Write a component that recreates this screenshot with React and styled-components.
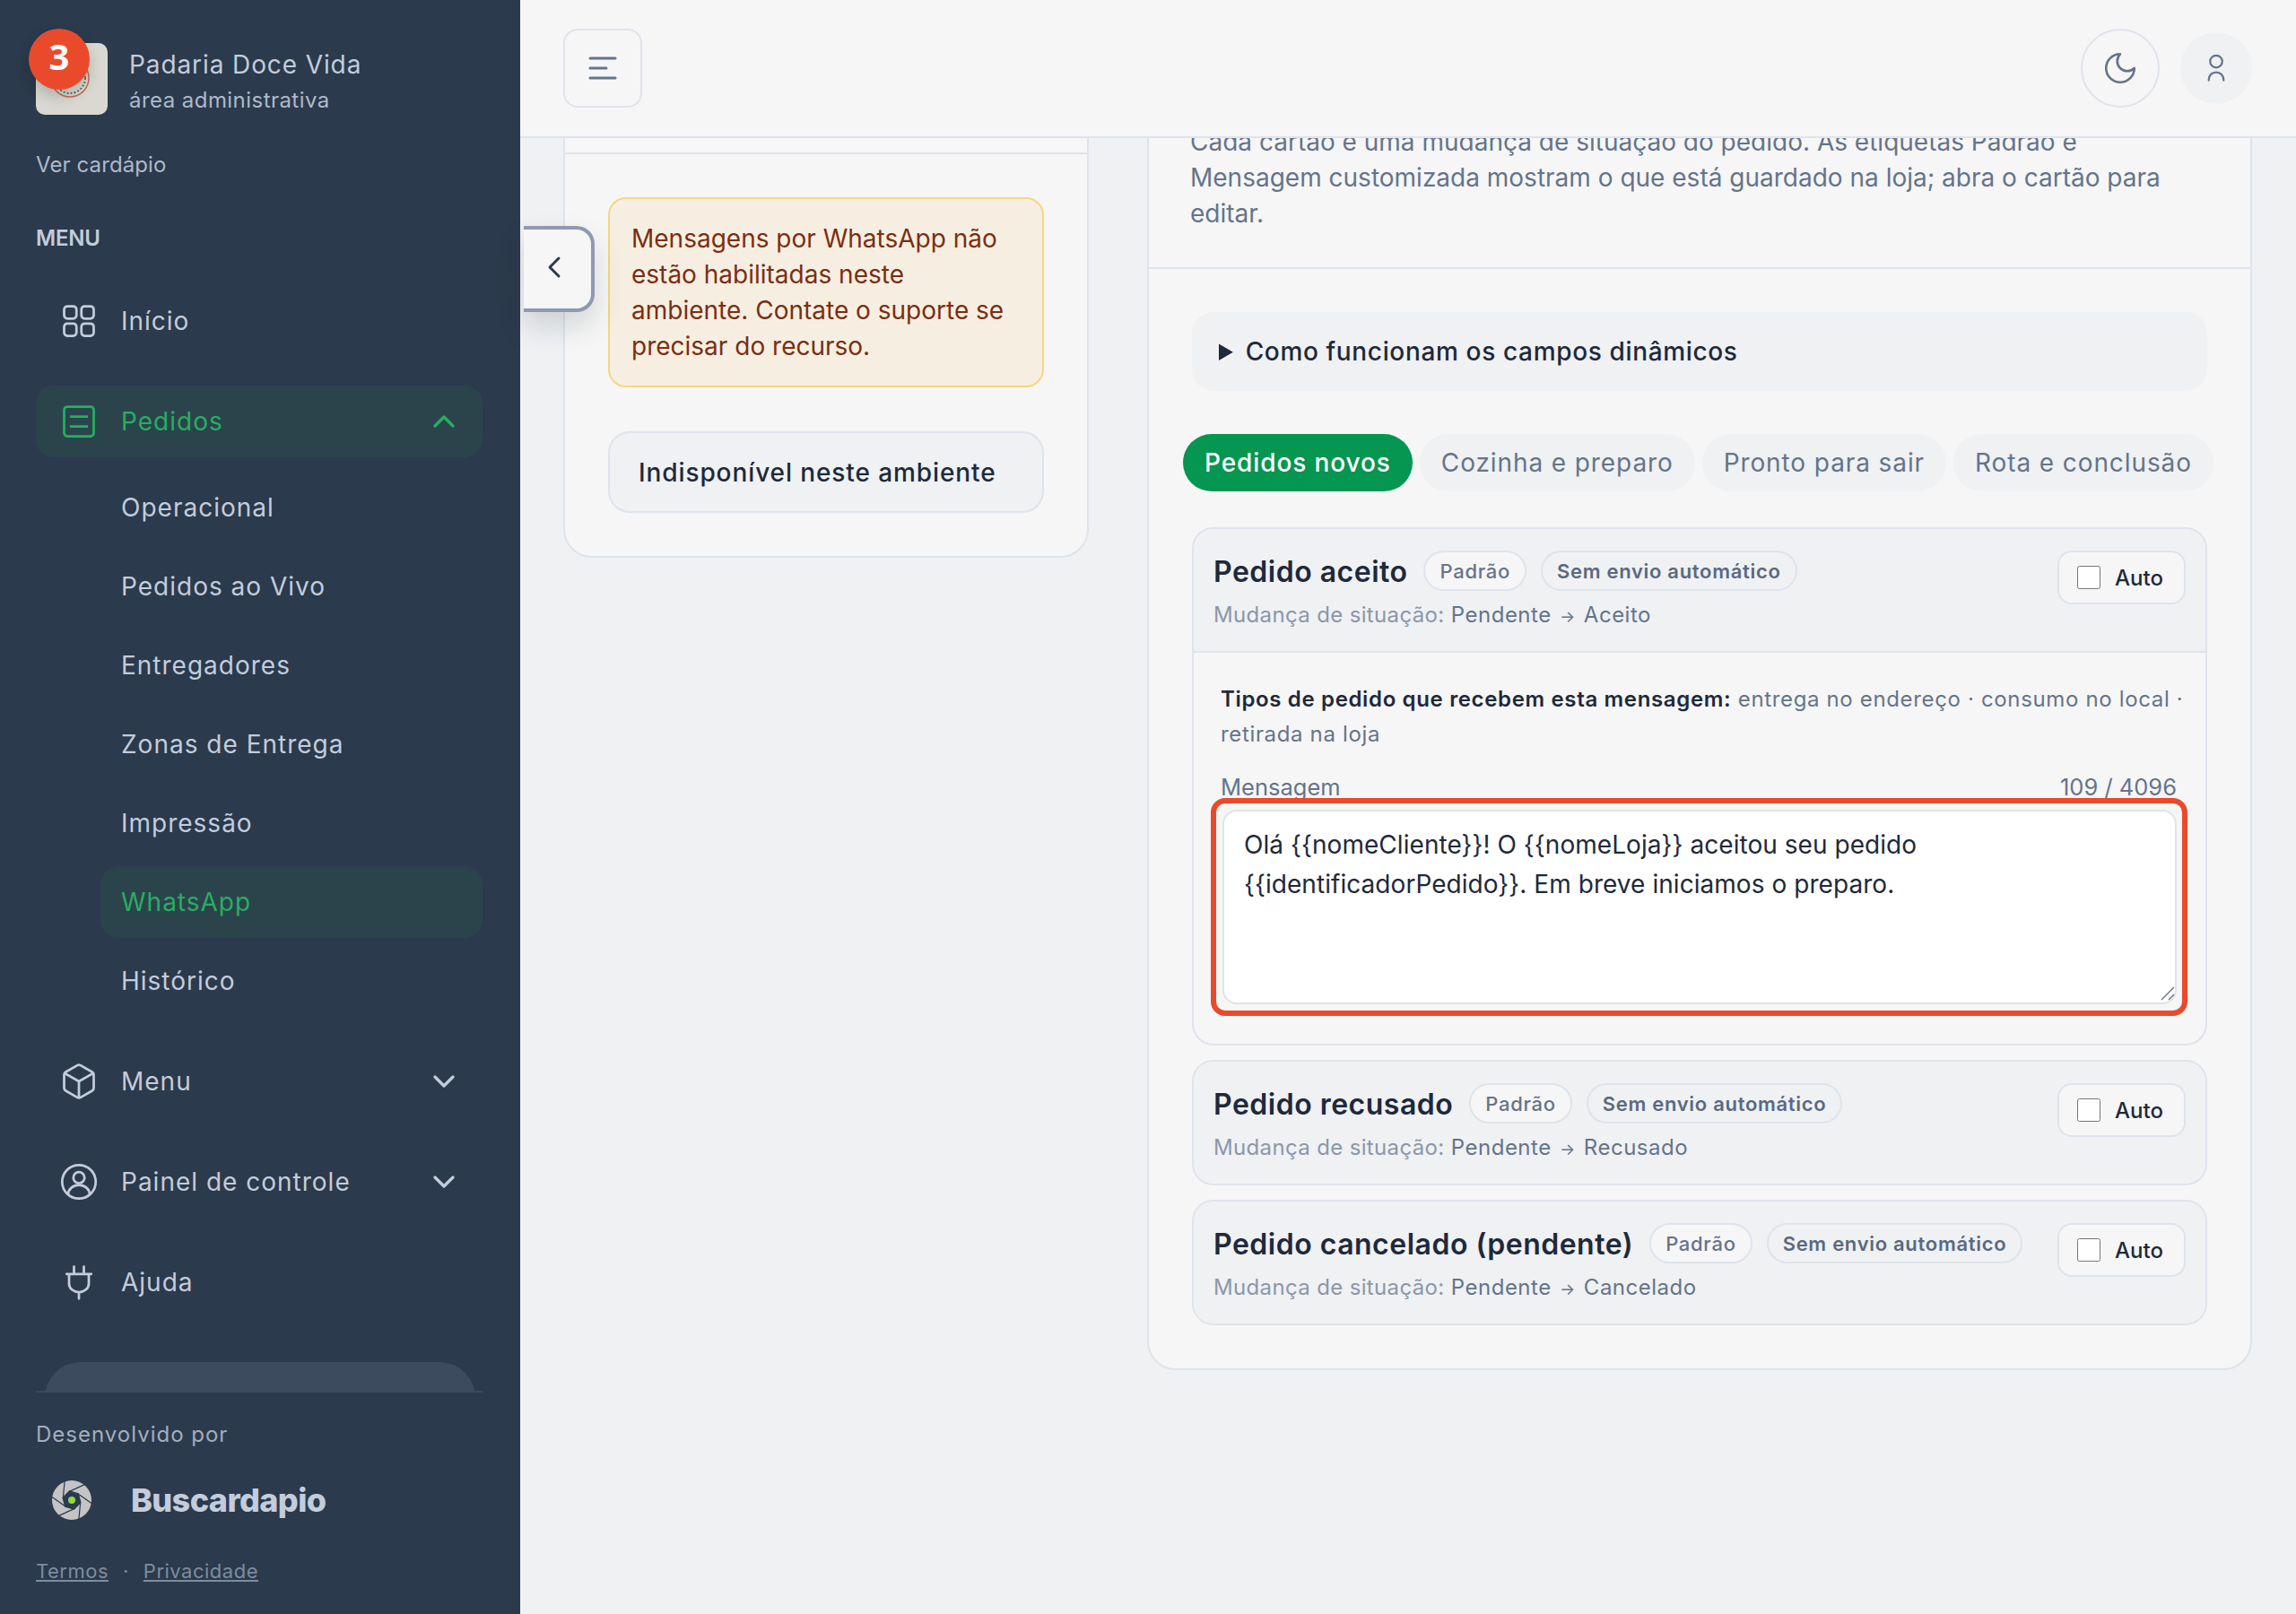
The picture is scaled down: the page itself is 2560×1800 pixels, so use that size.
import React from 'react';
import styled, { createGlobalStyle } from 'styled-components';
import { ChevronDown, ChevronLeft, ChevronUp } from 'lucide-react';

const GlobalStyle = createGlobalStyle`
	* {
		box-sizing: border-box;
	}
	html, body {
		margin: 0;
		padding: 0;
	}
	body {
		font-family: 'Inter', 'Liberation Sans', sans-serif;
		background: #eff1f3;
	}
`;

const Page = styled.div`
	display: flex;
	width: 2560px;
	height: 1800px;
	overflow: hidden;
`;

const Sidebar = styled.aside`
	display: flex;
	flex-direction: column;
	flex: 0 0 580px;
	height: 100%;
	padding: 48px 42px 0 40px;
	background: #2b3a4c;
	color: #c3ccdc;
`;

const Brand = styled.div`
	position: relative;
	display: flex;
	align-items: center;
	gap: 24px;
	height: 80px;
`;

const LogoTile = styled.div`
	flex: 0 0 80px;
	height: 80px;
	border-radius: 10px;
	background: #d9d9d2;
	svg {
		display: block;
	}
`;

const Badge = styled.span`
	position: absolute;
	left: -8px;
	top: -16px;
	display: flex;
	align-items: center;
	justify-content: center;
	width: 68px;
	height: 68px;
	padding-bottom: 7px;
	border-radius: 50%;
	background: #ea4a2c;
	color: #fff;
	font-family: 'Open Sans', sans-serif;
	font-size: 40px;
	font-weight: 700;
	box-shadow: 0 8px 16px rgba(0, 0, 0, 0.18);
`;

const BrandText = styled.div`
	display: flex;
	flex-direction: column;
	gap: 4px;
	padding-top: 3px;
`;

const BrandName = styled.span`
	font-size: 28px;
	line-height: 40px;
	letter-spacing: 0.9px;
`;

const BrandSub = styled.span`
	font-size: 24px;
	line-height: 32px;
	letter-spacing: 0.45px;
	color: #aeb9ca;
`;

const MenuLink = styled.a`
	margin-top: 36px;
	font-size: 24px;
	line-height: 40px;
	letter-spacing: 0.1px;
	color: #aeb9ca;
`;

const SectionLabel = styled.h3`
	margin: 42px 0 32px;
	font-size: 24px;
	line-height: 40px;
	font-weight: 600;
	letter-spacing: -0.2px;
	color: #c3ccdc;
`;

const Nav = styled.nav`
	flex: 1;
	min-height: 0;
	overflow: hidden;
`;

const NavItem = styled.div`
	display: flex;
	align-items: center;
	gap: 25px;
	height: 80px;
	margin-bottom: ${(p) => (p.$open ? '16px' : '32px')};
	padding: 0 23px 0 26px;
	border-radius: 20px;
	font-size: 28px;
	letter-spacing: 1px;
	background: ${(p) => (p.$active ? '#2b444c' : 'transparent')};
	color: ${(p) => (p.$active ? '#27ae60' : '#c3ccdc')};
	svg {
		flex: none;
	}
	svg.caret {
		margin-left: auto;
	}
`;

const SubList = styled.div`
	display: flex;
	flex-direction: column;
	gap: 8px;
	margin: 0 0 32px 72px;
`;

const SubItem = styled.div`
	display: flex;
	align-items: center;
	height: 80px;
	padding-left: 23px;
	border-radius: 20px;
	font-size: 28px;
	letter-spacing: 1px;
	background: ${(p) => (p.$active ? '#2b444c' : 'transparent')};
	color: ${(p) => (p.$active ? '#27ae60' : '#c3ccdc')};
`;

const NavPeek = styled.div`
	height: 100px;
	margin: 49px 8px 0 10px;
	border-radius: 40px 40px 0 0;
	background: #3c4b5d;
`;

const SideFooter = styled.footer`
	height: 249px;
	padding-top: 29px;
	border-top: 2px solid #3a4a5c;
`;

const MadeBy = styled.div`
	font-size: 24px;
	line-height: 36px;
	letter-spacing: 1px;
	color: #a3aebf;
`;

const MakerRow = styled.div`
	display: flex;
	align-items: center;
	gap: 44px;
	margin-top: 28px;
	padding-left: 18px;
	height: 54px;
`;

const MakerName = styled.span`
	font-family: 'Inter', sans-serif;
	font-size: 36px;
	font-weight: 800;
	letter-spacing: -0.6px;
	color: #c3ccdc;
`;

const LegalRow = styled.div`
	display: flex;
	align-items: center;
	gap: 16px;
	margin-top: 36px;
	font-size: 22px;
	line-height: 32px;
	letter-spacing: 0.5px;
	color: #7e8ca0;
`;

const LegalLink = styled.a`
	color: inherit;
	text-decoration: underline;
`;

const Main = styled.main`
	position: relative;
	display: flex;
	flex-direction: column;
	flex: 1;
	min-width: 0;
	height: 100%;
`;

const TopBar = styled.header`
	display: flex;
	align-items: center;
	justify-content: space-between;
	flex: 0 0 154px;
	padding: 0 49px 0 48px;
	border-bottom: 2px solid #dfe3eb;
	background: #f6f6f6;
`;

const SquareButton = styled.button`
	display: flex;
	align-items: center;
	justify-content: center;
	width: 88px;
	height: 88px;
	padding: 0;
	border: 2px solid #dfe3eb;
	border-radius: 16px;
	background: transparent;
	color: #64748b;
`;

const TopActions = styled.div`
	display: flex;
	align-items: center;
	gap: 23px;
`;

const ThemeButton = styled(SquareButton)`
	border-radius: 50%;
`;

const UserButton = styled.button`
	display: flex;
	align-items: center;
	justify-content: center;
	width: 80px;
	height: 80px;
	padding: 0;
	border: 0;
	border-radius: 50%;
	background: #eff1f3;
	color: #64748b;
`;

const CollapseTab = styled.button`
	position: absolute;
	left: 4px;
	top: 252px;
	display: flex;
	align-items: center;
	justify-content: center;
	width: 79px;
	height: 96px;
	padding: 0 8px 4px 0;
	border: 4px solid #8e9aae;
	border-left: 0;
	border-radius: 0 20px 20px 0;
	background: #f6f6f6;
	color: #2b3a4c;
	box-shadow: 0 16px 32px rgba(30, 41, 59, 0.16);
`;

const Scroller = styled.div`
	flex: 1;
	min-height: 0;
	overflow: hidden;
`;

const Columns = styled.div`
	display: grid;
	grid-template-columns: 586px minmax(0, 1fr);
	align-items: start;
	gap: 65px;
	margin-top: -114px;
	padding: 0 49px 0 48px;
`;

const Panel = styled.section`
	border: 2px solid #dfe3eb;
	border-radius: 32px;
	background: #f6f6f6;
`;

const PanelHead = styled.div`
	height: 130px;
	border-bottom: 2px solid #dfe3eb;
`;

const PanelBody = styled.div`
	display: flex;
	flex-direction: column;
	gap: 49px;
	padding: 48px;
`;

const Notice = styled.div`
	padding: 24px 24px;
	border: 2px solid #f5d77f;
	border-radius: 20px;
	background: #f6efe1;
	color: #7c2d12;
	font-size: 28px;
	line-height: 40px;
`;

const DisabledButton = styled.div`
	display: flex;
	align-items: center;
	height: 91px;
	padding-left: 32px;
	border: 2px solid #dfe3eb;
	border-radius: 24px;
	background: #eff1f3;
	color: #1e293b;
	font-size: 28px;
	font-weight: 500;
	letter-spacing: 0.9px;
`;

const Intro = styled.p`
	margin: 0;
	padding: 96px 46px 40px;
	border-bottom: 2px solid #dfe3eb;
	color: #64748b;
	font-size: 28px;
	line-height: 40px;
`;

const TemplatesBody = styled.div`
	padding: 48px;
`;

const Hint = styled.details`
	padding: 24px 30px;
	border-radius: 24px;
	background: #eff1f3;
	color: #1e293b;
	font-size: 28px;
	line-height: 40px;
	font-weight: 500;
	letter-spacing: 0.65px;
	summary {
		display: list-item;
	}
`;

const Tabs = styled.div`
	display: flex;
	gap: 8px;
	margin: 48px -10px 40px;
`;

const Tab = styled.button`
	flex: none;
	height: 64px;
	padding: 0 24px;
	border: 0;
	border-radius: 32px;
	font-family: inherit;
	font-size: 28px;
	letter-spacing: 0.9px;
	white-space: nowrap;
	font-weight: ${(p) => (p.$active ? 500 : 400)};
	background: ${(p) => (p.$active ? '#059652' : '#eff1f3')};
	color: ${(p) => (p.$active ? '#fff' : '#64748b')};
`;

const CardStack = styled.div`
	display: flex;
	flex-direction: column;
	gap: 16px;
`;

const Card = styled.article`
	overflow: hidden;
	border: 2px solid #dfe3eb;
	border-radius: 24px;
	background: #f6f6f6;
`;

const CardHead = styled.div`
	display: flex;
	align-items: flex-start;
	justify-content: space-between;
	height: ${(p) => (p.$open ? '138px' : '136px')};
	padding: 24px 22px 0;
	background: #eff1f3;
	border-bottom: ${(p) => (p.$open ? '2px solid #dfe3eb' : '0')};
`;

const CardTitleRow = styled.div`
	display: flex;
	align-items: center;
	gap: 16px;
	height: 45px;
`;

const CardTitle = styled.h4`
	margin: 3px 2px 0 0;
	font-size: 32px;
	line-height: 44px;
	font-weight: 600;
	letter-spacing: 0.5px;
	color: #1e293b;
`;

const Chip = styled.span`
	display: inline-flex;
	align-items: center;
	height: 45px;
	padding: 0 16px;
	border: 2px solid #dfe3eb;
	border-radius: 23px;
	font-size: 22px;
	font-weight: ${(p) => (p.$muted ? 600 : 500)};
	letter-spacing: 0.7px;
	background: ${(p) => (p.$muted ? '#eff1f3' : '#f6f6f6')};
	color: ${(p) => (p.$muted ? '#5a6980' : '#64748b')};
`;

const Transition = styled.div`
	margin-top: 9px;
	font-size: 24px;
	line-height: 36px;
	color: #64748b;
	letter-spacing: 0.5px;
	em {
		font-style: normal;
		color: #8b97a9;
		letter-spacing: 0.35px;
	}
	i {
		padding: 0 2px;
		font-style: normal;
		font-size: 18px;
	}
`;

const AutoToggle = styled.label`
	display: flex;
	align-items: center;
	gap: 16px;
	flex: 0 0 143px;
	height: 60px;
	padding-left: 20px;
	border: 2px solid #dfe3eb;
	border-radius: 16px;
	background: #f6f6f6;
	color: #1e293b;
	font-size: 24px;
	font-weight: 500;
	input {
		width: 26px;
		height: 26px;
		margin: 0;
	}
`;

const CardBody = styled.div`
	padding: 32px 32px 44px 30px;
`;

const Audience = styled.p`
	margin: 0 -10px 0 0;
	font-size: 24px;
	line-height: 39px;
	color: #64748b;
	letter-spacing: 0.65px;
	strong {
		font-weight: 600;
		color: #1e293b;
	}
`;

const FieldMeta = styled.div`
	display: flex;
	justify-content: space-between;
	margin-top: 22px;
	font-size: 25.5px;
	line-height: 36px;
	color: #64748b;
`;

const FieldWrap = styled.div`
	position: relative;
	display: flex;
	margin: 7px 0 0 2px;
`;

const MessageBox = styled.textarea`
	flex: 1;
	height: 217px;
	padding: 15px 22px;
	border: 2px solid #dfe3eb;
	border-radius: 16px;
	outline: 0;
	resize: none;
	background: #fff;
	color: #1e293b;
	font-family: inherit;
	font-size: 28px;
	line-height: 44px;
	letter-spacing: 0.05px;
`;

const ResizeGrip = styled.svg`
	position: absolute;
	right: 2px;
	bottom: 4px;
	width: 16px;
	height: 16px;
`;

const Highlight = styled.span`
	position: absolute;
	inset: -13px -12px -13px -13px;
	border: 6px solid #ea4a2c;
	border-radius: 16px;
	pointer-events: none;
`;

function IconGrid() {
	return (
		<svg width='44' height='44' viewBox='0 0 24 24' fill='none' stroke='currentColor' strokeWidth='1.5'>
			<rect x='3' y='3' width='7.5' height='7.5' rx='2' />
			<rect x='13.5' y='3' width='7.5' height='7.5' rx='2' />
			<rect x='3' y='13.5' width='7.5' height='7.5' rx='2' />
			<rect x='13.5' y='13.5' width='7.5' height='7.5' rx='2' />
		</svg>
	);
}

function IconList() {
	return (
		<svg width='44' height='44' viewBox='0 0 24 24' fill='none' stroke='currentColor' strokeWidth='1.5'>
			<rect x='3' y='3' width='18' height='18' rx='2' />
			<path d='M6.5 9h11M6.5 15h11' />
		</svg>
	);
}

function IconBox() {
	return (
		<svg width='44' height='44' viewBox='0 0 24 24' fill='none' stroke='currentColor' strokeWidth='1.5' strokeLinejoin='round'>
			<path d='M21 8a2 2 0 0 0-1-1.73l-7-4a2 2 0 0 0-2 0l-7 4A2 2 0 0 0 3 8v8a2 2 0 0 0 1 1.73l7 4a2 2 0 0 0 2 0l7-4A2 2 0 0 0 21 16Z' />
			<path d='M3.3 7 12 12l8.7-5M12 22V12' />
		</svg>
	);
}

function IconUserCircle() {
	return (
		<svg width='44' height='44' viewBox='0 0 24 24' fill='none' stroke='currentColor' strokeWidth='1.5' strokeLinecap='round'>
			<circle cx='12' cy='12' r='10.2' />
			<circle cx='12' cy='9.5' r='3.4' />
			<path d='M5.5 19.5a6.5 5.5 0 0 1 13 0' />
		</svg>
	);
}

function IconPlug() {
	return (
		<svg width='44' height='44' viewBox='0 0 24 24' fill='none' stroke='currentColor' strokeWidth='1.5' strokeLinecap='round'>
			<path d='M9 2.5v4.5M15 2.5v4.5M4.5 7h15M6 7v6a6 5 0 0 0 12 0V7M12 18v4' />
		</svg>
	);
}

function IconLines() {
	return (
		<svg width='32' height='26' viewBox='0 0 32 26' fill='none' stroke='currentColor' strokeWidth='3' strokeLinecap='round'>
			<path d='M2 2h28M2 13h18M2 24h28' />
		</svg>
	);
}

function IconMoon() {
	return (
		<svg width='42' height='42' viewBox='0 0 24 24' fill='none' stroke='currentColor' strokeWidth='1.5' strokeLinejoin='round'>
			<path d='M12 3a6 6 0 0 0 9 9 9 9 0 1 1-9-9Z' />
		</svg>
	);
}

function IconPerson() {
	return (
		<svg width='36' height='36' viewBox='0 0 24 24' fill='none' stroke='currentColor' strokeWidth='1.5' strokeLinecap='round'>
			<circle cx='12' cy='7' r='4.5' />
			<path d='M6.5 21v-.5a5.5 5.5 0 0 1 11 0v.5' />
		</svg>
	);
}

function SealLogo() {
	return (
		<svg width='80' height='80' viewBox='0 0 80 80'>
			<circle cx='38' cy='39' r='21' fill='#dcdcd5' stroke='#c96a50' strokeWidth='1.5' />
			<circle cx='38' cy='39' r='17' fill='none' stroke='#6b6b66' strokeWidth='2' strokeDasharray='2 2' />
			<circle cx='38' cy='40' r='5' fill='#8c8c84' />
		</svg>
	);
}

function ApertureLogo() {
	const blades = [0, 60, 120, 180, 240, 300].map((deg) => {
		const a = ((deg + 15) * Math.PI) / 180;
		const b = ((deg + 70) * Math.PI) / 180;
		return {
			x1: 22 + 10 * Math.cos(a),
			y1: 23 + 10 * Math.sin(a),
			x2: 22 + 23 * Math.cos(b),
			y2: 23 + 23 * Math.sin(b),
		};
	});
	const hexagon = [0, 60, 120, 180, 240, 300]
		.map((deg) => {
			const a = ((deg + 15) * Math.PI) / 180;
			return `${22 + 11 * Math.cos(a)},${23 + 11 * Math.sin(a)}`;
		})
		.join(' ');
	return (
		<svg width='44' height='46' viewBox='0 0 44 46'>
			<circle cx='22' cy='23' r='22' fill='#c4c4c4' />
			<polygon points={hexagon} fill='#2b3a4c' />
			{blades.map((l, i) => (
				<line key={i} {...l} stroke='#2b3a4c' strokeWidth='1.2' />
			))}
			<circle cx='22' cy='23' r='4' fill='#8edb3a' />
		</svg>
	);
}

const subItems = [
	'Operacional',
	'Pedidos ao Vivo',
	'Entregadores',
	'Zonas de Entrega',
	'Impressão',
	'WhatsApp',
	'Histórico',
];

const tabs = [
	'Pedidos novos',
	'Cozinha e preparo',
	'Pronto para sair',
	'Rota e conclusão',
];

function StatusCard({ title, target, children }) {
	const open = Boolean(children);
	return (
		<Card>
			<CardHead $open={open}>
				<div>
					<CardTitleRow>
						<CardTitle>{title}</CardTitle>
						<Chip>Padrão</Chip>
						<Chip $muted>Sem envio automático</Chip>
					</CardTitleRow>
					<Transition>
						<em>Mudança de situação:</em> Pendente <i>→</i> {target}
					</Transition>
				</div>
				<AutoToggle>
					<input type='checkbox' />
					Auto
				</AutoToggle>
			</CardHead>
			{children}
		</Card>
	);
}

export default function App() {
	return (
		<Page>
			<GlobalStyle />
			<Sidebar>
				<Brand>
					<LogoTile>
						<SealLogo />
					</LogoTile>
					<Badge>3</Badge>
					<BrandText>
						<BrandName>Padaria Doce Vida</BrandName>
						<BrandSub>área administrativa</BrandSub>
					</BrandText>
				</Brand>
				<MenuLink>Ver cardápio</MenuLink>
				<SectionLabel>MENU</SectionLabel>
				<Nav>
					<NavItem>
						<IconGrid />
						Início
					</NavItem>
					<NavItem $active $open>
						<IconList />
						Pedidos
						<ChevronUp className='caret' size={40} strokeWidth={2} />
					</NavItem>
					<SubList>
						{subItems.map((item) => (
							<SubItem key={item} $active={item === 'WhatsApp'}>
								{item}
							</SubItem>
						))}
					</SubList>
					<NavItem>
						<IconBox />
						Menu
						<ChevronDown className='caret' size={40} strokeWidth={2} />
					</NavItem>
					<NavItem>
						<IconUserCircle />
						Painel de controle
						<ChevronDown className='caret' size={40} strokeWidth={2} />
					</NavItem>
					<NavItem>
						<IconPlug />
						Ajuda
					</NavItem>
					<NavPeek />
				</Nav>
				<SideFooter>
					<MadeBy>Desenvolvido por</MadeBy>
					<MakerRow>
						<ApertureLogo />
						<MakerName>Buscardapio</MakerName>
					</MakerRow>
					<LegalRow>
						<LegalLink>Termos</LegalLink>
						<span>·</span>
						<LegalLink>Privacidade</LegalLink>
					</LegalRow>
				</SideFooter>
			</Sidebar>
			<Main>
				<TopBar>
					<SquareButton>
						<IconLines />
					</SquareButton>
					<TopActions>
						<ThemeButton>
							<IconMoon />
						</ThemeButton>
						<UserButton>
							<IconPerson />
						</UserButton>
					</TopActions>
				</TopBar>
				<CollapseTab>
					<ChevronLeft size={40} strokeWidth={1.75} />
				</CollapseTab>
				<Scroller>
					<Columns>
						<Panel>
							<PanelHead />
							<PanelBody>
								<Notice>
									Mensagens por WhatsApp não estão habilitadas neste
									ambiente. Contate o suporte se precisar do recurso.
								</Notice>
								<DisabledButton>Indisponível neste ambiente</DisabledButton>
							</PanelBody>
						</Panel>
						<Panel>
							<Intro>
								Cada cartão é uma mudança de situação do pedido. As etiquetas
								Padrão e Mensagem customizada mostram o que está guardado na
								loja; abra o cartão para editar.
							</Intro>
							<TemplatesBody>
								<Hint>
									<summary>Como funcionam os campos dinâmicos</summary>
								</Hint>
								<Tabs>
									{tabs.map((tab, i) => (
										<Tab key={tab} $active={i === 0}>
											{tab}
										</Tab>
									))}
								</Tabs>
								<CardStack>
									<StatusCard title='Pedido aceito' target='Aceito'>
										<CardBody>
											<Audience>
												<strong>Tipos de pedido que recebem esta mensagem:</strong>{' '}
												entrega no endereço · consumo no local · retirada na loja
											</Audience>
											<FieldMeta>
												<span>Mensagem</span>
												<span>109 / 4096</span>
											</FieldMeta>
											<FieldWrap>
												<MessageBox
													readOnly
													defaultValue='Olá {{nomeCliente}}! O {{nomeLoja}} aceitou seu pedido {{identificadorPedido}}. Em breve iniciamos o preparo.'
												/>
												<ResizeGrip viewBox='0 0 16 16' fill='none' stroke='#6b7280' strokeWidth='1.4'>
													<path d='M1 15 15 1M9 15l6-6' />
												</ResizeGrip>
												<Highlight />
											</FieldWrap>
										</CardBody>
									</StatusCard>
									<StatusCard title='Pedido recusado' target='Recusado' />
									<StatusCard title='Pedido cancelado (pendente)' target='Cancelado' />
								</CardStack>
							</TemplatesBody>
						</Panel>
					</Columns>
				</Scroller>
			</Main>
		</Page>
	);
}
